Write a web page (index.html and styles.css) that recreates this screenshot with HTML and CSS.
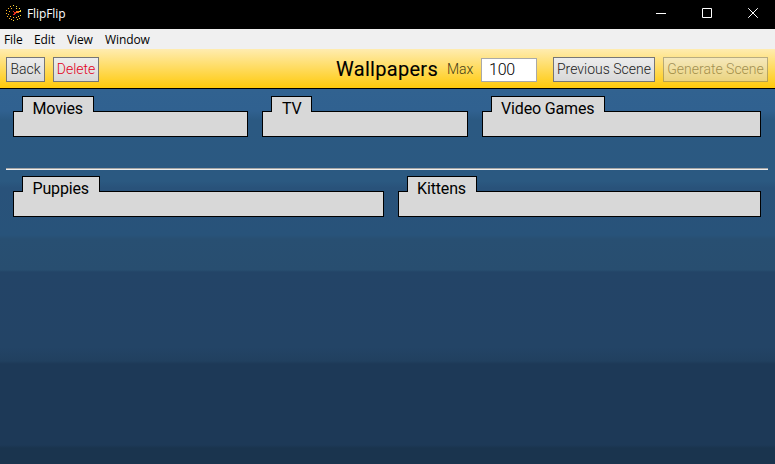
FILE: index.html
```html
<!DOCTYPE html>
<html lang="en">
<head>
<meta charset="utf-8">
<title>FlipFlip</title>
<link rel="stylesheet" href="styles.css">
</head>
<body>
<header class="titlebar">
  <svg class="logo" width="16" height="16" viewBox="0 0 16 16" shape-rendering="crispEdges">
    <path fill="#ffdc38" d="M7 0h1v1H7zM10 1h1v1h-1zM13 3h1v1h-1zM10 3h1v1h-1zM14 5h1v1h-1zM12 6h3v1h-3zM14 10h1v1h-1zM12 11h1v1h-1zM11 14h1v1h-1zM7 15h1v1H7z"/>
    <path fill="#ffb627" d="M4 1h1v1H4zM2 3h1v1H2zM5 3h1v1H5zM0 5h1v1H0zM3 6h1v1H3zM0 8h1v1H0zM2 9h1v1H2zM1 11h1v1H1zM4 11h1v1H4zM3 13h1v1H3zM5 14h1v1H5zM7 12h1v1H7zM10 12h1v1h-1zM13 13h1v1h-1z"/>
    <path fill="#ff7420" d="M10 6h3v1h-3zM9 7h4v1H9z"/>
    <path fill="#e52c20" d="M7 6h1v1H7zM8 7h2v2H8zM7 9h2v1H7z"/>
  </svg>
  <span class="app-name">FlipFlip</span>
  <div class="window-controls">
    <svg width="10" height="10" viewBox="0 0 10 10"><path d="M0 5.5h10"/></svg>
    <svg width="10" height="10" viewBox="0 0 10 10"><path d="M.5.5h9v9h-9z"/></svg>
    <svg width="10" height="10" viewBox="0 0 10 10"><path d="M.2.2l9.6 9.6M9.8.2L.2 9.8"/></svg>
  </div>
</header>
<nav class="menu">
  <span class="menu-file">File</span><span class="menu-edit">Edit</span><span class="menu-view">View</span><span>Window</span>
</nav>
<div class="toolbar">
  <button class="btn back">Back</button>
  <button class="btn delete">Delete</button>
  <h1 class="title">Wallpapers</h1>
  <label class="max" for="max">Max</label>
  <input class="max-input" id="max" type="text" value="100">
  <button class="btn previous">Previous Scene</button>
  <button class="btn generate" disabled>Generate Scene</button>
</div>
<main class="content">
  <div class="row row-media">
    <section class="group"><h2 class="tab movies">Movies</h2></section>
    <section class="group"><h2 class="tab tv">TV</h2></section>
    <section class="group"><h2 class="tab games">Video Games</h2></section>
  </div>
  <hr class="divider">
  <div class="row row-pets">
    <section class="group"><h2 class="tab puppies">Puppies</h2></section>
    <section class="group"><h2 class="tab kittens">Kittens</h2></section>
  </div>
</main>
</body>
</html>
```
FILE: styles.css
```css
* { box-sizing: border-box; }

body {
  margin: 0;
  height: 464px;
  overflow: hidden;
  display: flex;
  flex-direction: column;
  font-family: Roboto, sans-serif;
}

.titlebar {
  height: 29px;
  flex: none;
  display: flex;
  align-items: center;
  padding: 0 17px 3px 6px;
  background: #000;
  color: #fff;
}

.app-name {
  margin-left: 5px;
  padding-top: 2px;
  font: 12px/16px "Open Sans", sans-serif;
  letter-spacing: -0.1px;
}

.window-controls {
  display: flex;
  gap: 36px;
  margin-left: auto;
}

.window-controls path {
  fill: none;
  stroke: #fff;
  stroke-width: 1;
}

.menu {
  height: 20px;
  flex: none;
  padding-left: 4px;
  background: #f0f0f0;
  color: #000;
  font: 12px/21px "Open Sans", sans-serif;
  letter-spacing: -0.1px;
  display: flex;
}

.menu-file { width: 30px; }
.menu-edit { width: 33px; }
.menu-view { width: 38px; }

.toolbar {
  height: 40px;
  flex: none;
  display: flex;
  align-items: center;
  padding: 1px 7px 0 6px;
  border-bottom: 1px solid #000;
  background: linear-gradient(#ffecb0, #ffca0b);
}

.btn {
  height: 25px;
  padding: 0;
  border: 1px solid #767676;
  background: linear-gradient(#ededed, #d8d8d8);
  color: #222;
  font: 300 14px/21px Roboto, sans-serif;
  white-space: nowrap;
}

.back { width: 39px; margin-right: 8px; }
.delete { width: 46px; color: #e3001b; }
.previous { width: 102px; margin-right: 8px; }
.generate { width: 105px; opacity: 0.5; color: #444; }

.title {
  width: 102px;
  margin: 0 9px 0 auto;
  font-size: 20px;
  line-height: 24px;
  font-weight: 400;
  letter-spacing: 0.3px;
  -webkit-text-stroke: 0.1px #000;
  white-space: nowrap;
}

.max {
  width: 34px;
  color: #443c18;
  font-size: 14px;
  font-weight: 300;
}

.max-input {
  width: 56px;
  height: 24px;
  margin: 1px 16px 0 0;
  padding: 0 0 0 7px;
  border: 1px solid #a9a9a9;
  background: #fff;
  color: #000;
  font: 300 16px/20px Roboto, sans-serif;
  letter-spacing: -0.2px;
}

.content {
  flex: 1;
  padding: 22px 7px 0 6px;
  background: linear-gradient(
    #316290 0, #306190 22px, #2b5982 31px, #2b5981 92px,
    #29527a 99px, #28537a 146px, #284f72 150px, #284e70 181px,
    #234467 183px, #234466 258px, #21405f 272px, #1d3957 275px,
    #1d3957 356px, #1a344e 359px, #1a344e 375px);
}

.row {
  display: grid;
  column-gap: 14px;
  margin: 0 7px;
}

.row-media { grid-template-columns: 235fr 206fr 279fr; }
.row-pets { grid-template-columns: 371fr 363fr; }

.group {
  height: 26px;
  padding-left: 8px;
  border: 1px solid #000;
  background: #d8d8d8;
}

.tab {
  height: 16px;
  margin: -16px 0 0;
  padding-left: 9px;
  border: 1px solid #000;
  border-bottom: 0;
  background: #d8d8d8;
  color: #000;
  font-size: 16px;
  line-height: 24px;
  font-weight: 400;
  letter-spacing: -0.15px;
  white-space: nowrap;
}

.movies { width: 72px; padding-left: 9.5px; }
.tv { width: 41px; padding-left: 10px; }
.games { width: 114px; }
.puppies { width: 78px; padding-left: 9.5px; }
.kittens { width: 70px; }

.divider {
  height: 2px;
  margin: 31px 0 21px;
  border: 0;
  border-top: 1px solid #a5a5a5;
  background: #eee;
}
```
